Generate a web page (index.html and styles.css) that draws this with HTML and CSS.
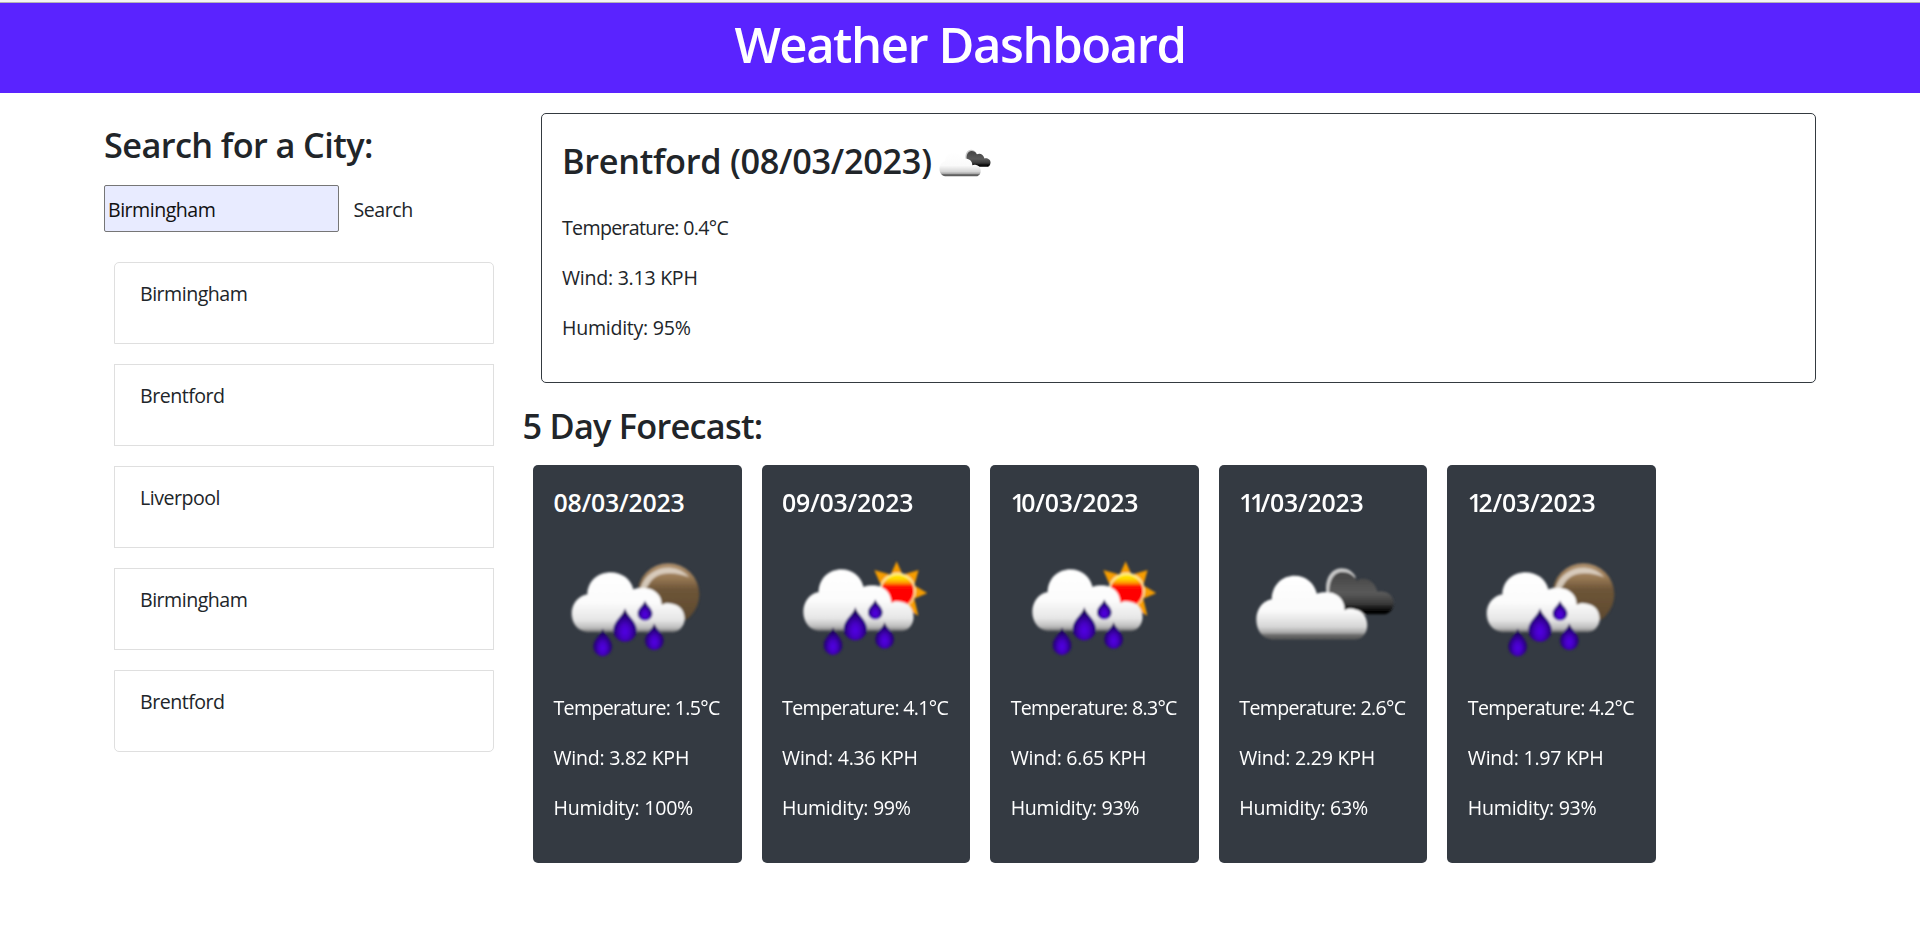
FILE: index.html
```html
<!DOCTYPE html>
<html lang="en">
<head>
<meta charset="utf-8">
<title>Weather Dashboard</title>
<link rel="stylesheet" href="styles.css">
</head>
<body>
<svg class="defs" width="0" height="0" aria-hidden="true">
  <defs>
    <linearGradient id="cloudFill" x1="0" y1="0" x2="0" y2="1">
      <stop offset="0" stop-color="#fff"/><stop offset=".5" stop-color="#fcfcfc"/><stop offset=".8" stop-color="#e6e6e6"/><stop offset=".93" stop-color="#bdbdbd"/><stop offset="1" stop-color="#777"/>
    </linearGradient>
    <linearGradient id="overcastFill" x1="0" y1="0" x2="0" y2="1">
      <stop offset="0" stop-color="#fff"/><stop offset=".55" stop-color="#fafafa"/><stop offset=".8" stop-color="#d6d6d6"/><stop offset=".89" stop-color="#aaa"/><stop offset=".93" stop-color="#6c6c6c"/><stop offset="1" stop-color="#555"/>
    </linearGradient>
    <linearGradient id="darkFill" x1="0" y1="0" x2="0" y2="1">
      <stop offset="0" stop-color="#444"/><stop offset=".5" stop-color="#5a5a5a"/><stop offset=".75" stop-color="#3a3a3a"/><stop offset=".9" stop-color="#080808"/><stop offset="1" stop-color="#000"/>
    </linearGradient>
    <linearGradient id="moonFill" x1="0" y1="0" x2="0" y2="1">
      <stop offset="0" stop-color="#b0916e"/><stop offset=".22" stop-color="#9b7c57"/><stop offset=".42" stop-color="#6e5538"/><stop offset="1" stop-color="#5c482d"/>
    </linearGradient>
    <linearGradient id="sunFill" x1="0" y1="0" x2="0" y2="1">
      <stop offset="0" stop-color="#ffe600"/><stop offset=".12" stop-color="#ffdf00"/><stop offset=".26" stop-color="#ff9000"/><stop offset=".36" stop-color="#ff0800"/><stop offset="1" stop-color="#f00"/>
    </linearGradient>
    <radialGradient id="dropFill" cx=".5" cy=".7" r=".6">
      <stop offset="0" stop-color="#5200e6"/><stop offset=".35" stop-color="#4600c4"/><stop offset=".75" stop-color="#26007c"/><stop offset="1" stop-color="#14004a"/>
    </radialGradient>
    <filter id="soften" x="-5%" y="-5%" width="110%" height="110%"><feGaussianBlur stdDeviation="2.6"/></filter>
    <path id="cloud" d="M112 274C83 272 65 247 65 218C65 190 84 165 112 161C113 120 145 95 182 95C215 95 243 115 250 146C262 142 275 141 288 142C315 144 336 165 335 192C343 187 355 186 365 189C390 192 404 212 404 234C404 256 388 273 370 274Z"/>
    <path id="drop" fill="url(#dropFill)" d="M0 0C4 20 35 38 35 65A35 35 0 0 1-35 65C-35 38-4 20 0 0Z"/>
    <g id="drops">
      <use href="#drop" transform="translate(225 203)"/>
      <use href="#drop" transform="translate(285 180) scale(.63 .6)"/>
      <use href="#drop" transform="translate(158 264) scale(.8 .83)"/>
      <use href="#drop" transform="translate(313 248) scale(.8)"/>
    </g>
  </defs>
  <symbol id="rain-night" viewBox="9 -44 500 500">
    <g filter="url(#soften)">
      <circle cx="355" cy="161" r="93" fill="url(#moonFill)"/>
      <path d="M270 142C285 100 322 79 360 81C385 83 405 94 418 110C390 98 340 90 312 112C300 122 296 134 288 144Z" fill="#e2d8cc" opacity=".85"/>
      <use href="#cloud" fill="url(#cloudFill)"/>
      <use href="#drops"/>
    </g>
  </symbol>
  <symbol id="rain-day" viewBox="5 -44 500 500">
    <g filter="url(#soften)">
      <path d="M349 62L367 102L415 88L402 134L441 157L402 174L414 225L380 206L300 160L302 134L282 88L331 102Z" fill="#f79d00"/>
      <circle cx="352" cy="150" r="54" fill="#fff2b0"/>
      <circle cx="352" cy="151" r="49" fill="url(#sunFill)"/>
      <use href="#cloud" fill="url(#cloudFill)" transform="matrix(.976 0 0 1.03 5.5 -11.8)"/>
      <use href="#drops" transform="translate(0 -4)"/>
    </g>
  </symbol>
  <symbol id="overcast" viewBox="13 -44 500 500">
    <g filter="url(#soften)">
      <path d="M276 160C268 115 290 84 320 83C340 83 355 93 364 110L330 120L292 150Z" fill="#c8c8c8"/>
      <path d="M285 165C280 125 296 94 323 94C343 94 358 103 367 120C388 107 420 117 428 153C452 148 479 163 477 187C475 210 462 221 445 221H350C320 215 290 200 285 165Z" fill="url(#darkFill)"/>
      <use href="#cloud" fill="url(#overcastFill)" transform="matrix(.982 0 0 1.07 1.2 3.3)"/>
    </g>
  </symbol>
</svg>

<div class="window-edge"></div>
<header class="banner"><h1>Weather Dashboard</h1></header>

<main class="layout">
  <aside class="search">
    <h2>Search for a City:</h2>
    <form class="search-form">
      <input type="text" value="Birmingham" aria-label="City">
      <button type="button">Search</button>
    </form>
    <ul class="history">
      <li>Birmingham</li>
      <li>Brentford</li>
      <li>Liverpool</li>
      <li>Birmingham</li>
      <li>Brentford</li>
    </ul>
  </aside>

  <section class="weather">
    <article class="current">
      <div class="current-head">
        <h2>Brentford (08/03/2023)</h2>
        <svg class="current-icon"><use href="#overcast"/></svg>
      </div>
      <p class="temp">Temperature: 0.4°C</p>
      <p>Wind: 3.13 KPH</p>
      <p>Humidity: 95%</p>
    </article>

    <h2 class="forecast-title">5 Day Forecast:</h2>
    <div class="forecast">
      <article class="day">
        <h3>08/03/2023</h3>
        <svg><use href="#rain-night"/></svg>
        <p class="temp">Temperature: 1.5°C</p>
        <p>Wind: 3.82 KPH</p>
        <p>Humidity: 100%</p>
      </article>
      <article class="day">
        <h3>09/03/2023</h3>
        <svg><use href="#rain-day"/></svg>
        <p class="temp">Temperature: 4.1°C</p>
        <p>Wind: 4.36 KPH</p>
        <p>Humidity: 99%</p>
      </article>
      <article class="day">
        <h3><span class="ones">1</span>0/03/2023</h3>
        <svg><use href="#rain-day"/></svg>
        <p class="temp">Temperature: 8.3°C</p>
        <p>Wind: 6.65 KPH</p>
        <p>Humidity: 93%</p>
      </article>
      <article class="day">
        <h3><span class="ones">11</span>/03/2023</h3>
        <svg><use href="#overcast"/></svg>
        <p class="temp">Temperature: 2.6°C</p>
        <p>Wind: 2.29 KPH</p>
        <p>Humidity: 63%</p>
      </article>
      <article class="day">
        <h3><span class="ones">1</span>2/03/2023</h3>
        <svg><use href="#rain-night"/></svg>
        <p class="temp">Temperature: 4.2°C</p>
        <p>Wind: 1.97 KPH</p>
        <p>Humidity: 93%</p>
      </article>
    </div>
  </section>
</main>
</body>
</html>
```

FILE: styles.css
```css
* { box-sizing: border-box; }

body {
  margin: 0;
  background: #fff;
  color: #212529;
  font-family: "Open Sans", "Noto Sans", sans-serif;
  font-size: 19.6px;
  line-height: 30px;
  letter-spacing: -0.27px;
}

.defs { display: block; }

h1, h2, h3, p, ul { margin: 0; padding: 0; font-weight: 400; }

.window-edge {
  height: 3px;
  background: #f3f3f3;
  border-bottom: 1px solid #b4b4b4;
}

.banner {
  height: 90px;
  padding-top: 10.7px;
  background: #5a23ff;
  color: #fff;
  text-align: center;
}

h1 {
  font-size: 49px;
  font-weight: 600;
  line-height: 60px;
  letter-spacing: -1.43px;
}

h2 {
  font-size: 34.3px;
  font-weight: 600;
  line-height: 42px;
  letter-spacing: -0.6px;
}

.layout {
  display: flex;
  padding-left: 104px;
}

.search {
  width: 418.6px;
  padding-top: 31px;
}

.search-form {
  display: flex;
  margin-top: 19px;
}

.search-form input {
  width: 235px;
  height: 46.7px;
  padding: 8.4px 3px 6.3px;
  border: 1px solid #767676;
  border-radius: 2px;
  background: #e8ebff;
  color: #111;
  font: inherit;
  letter-spacing: -0.5px;
}

.search-form button {
  padding: 3px 14.5px 0;
  border: 0;
  background: none;
  color: inherit;
  font: inherit;
  letter-spacing: -0.45px;
}

.history {
  width: 380px;
  margin: 30.6px 0 0 10px;
  list-style: none;
  letter-spacing: -0.5px;
}

.history li {
  height: 82px;
  margin-bottom: 20px;
  padding: 16px 25px;
  border: 1px solid #dfdfdf;
}

.history li:first-child { border-radius: 5px 5px 0 0; }
.history li:last-child { border-radius: 0 0 5px 5px; }

.weather { padding-top: 20px; }

.current {
  width: 1275px;
  height: 270px;
  margin-left: 18.4px;
  padding: 20px;
  border: 1px solid #343a40;
  border-radius: 5px;
}

.current-head {
  display: flex;
  height: 62px;
  margin-bottom: 17.4px;
}

.current-head h2 {
  margin-top: 6.4px;
  letter-spacing: -0.3px;
}

.current-icon {
  width: 62px;
  height: 62px;
  margin-left: 1px;
}

p { margin-bottom: 20px; white-space: nowrap; }
.temp { letter-spacing: -0.68px; }

.forecast-title {
  margin-top: 21.5px;
  letter-spacing: -0.76px;
}

.forecast {
  display: flex;
  gap: 20px;
  margin: 18.9px 0 0 10.4px;
}

.day {
  width: 208.6px;
  height: 397.7px;
  padding: 21.3px 20.5px 0;
  border-radius: 5px;
  background: #343a42;
  color: #fff;
}

.day h3 {
  font-size: 24.9px;
  font-weight: 600;
  letter-spacing: -0.22px;
}

.day h3 .ones { letter-spacing: -3.6px; }

.day svg {
  display: block;
  width: 166.6px;
  height: 166.6px;
  margin: 9px 0 1px;
}
```
